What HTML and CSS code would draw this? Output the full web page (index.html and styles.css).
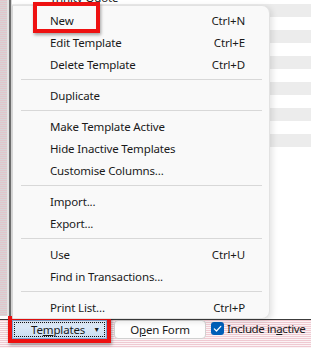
FILE: index.html
```html
<!DOCTYPE html>
<html lang="en">

<head>
    <meta charset="UTF-8">
    <meta name="viewport" content="width=device-width, initial-scale=1.0">
    <title>Templates</title>
    <link rel="stylesheet" href="styles.css">
</head>

<body>
    <div class="window">
        <div class="main">
            <div class="edge"></div>
            <div class="list">
                <div class="row row-top">Trinity Quote</div>
                <div class="row alt"></div>
                <div class="row"></div>
                <div class="row alt"></div>
                <div class="row"></div>
                <div class="row alt"></div>
                <div class="row"></div>
                <div class="row alt"></div>
                <div class="row"></div>
                <div class="row alt"></div>
                <div class="row"></div>
                <div class="row alt"></div>
            </div>
        </div>
        <div class="bar">
            <div class="mark">
                <div class="btn btn-templates">
                    <span>Te<u>m</u>plates</span>
                    <span class="caret">&#9660;</span>
                </div>
            </div>
            <div class="btn btn-open">O<u>p</u>en Form</div>
            <div class="check">
                <span class="box">
                    <svg width="13" height="13" viewBox="0 0 13 13">
                        <path d="M3.3 6.8 L5.5 9 L9.8 4.3" fill="none" stroke="#fff" stroke-width="1.2" stroke-linecap="round" stroke-linejoin="round" />
                    </svg>
                </span>
                <span>Include in<u>a</u>ctive</span>
            </div>
        </div>

        <div class="menu">
            <div class="item"><span>New</span><span class="key">Ctrl+N</span></div>
            <div class="item"><span>Edit Template</span><span class="key">Ctrl+E</span></div>
            <div class="item"><span>Delete Template</span><span class="key">Ctrl+D</span></div>
            <div class="sep"></div>
            <div class="item"><span>Duplicate</span></div>
            <div class="sep"></div>
            <div class="item"><span>Make Template Active</span></div>
            <div class="item"><span>Hide Inactive Templates</span></div>
            <div class="item"><span>Customise Columns...</span></div>
            <div class="sep"></div>
            <div class="item"><span>Import...</span></div>
            <div class="item"><span>Export...</span></div>
            <div class="sep"></div>
            <div class="item"><span>Use</span><span class="key">Ctrl+U</span></div>
            <div class="item"><span>Find in Transactions...</span></div>
            <div class="sep"></div>
            <div class="item"><span>Print List...</span><span class="key">Ctrl+P</span></div>
        </div>
        <div class="mark mark-new"></div>
    </div>
</body>

</html>
```

FILE: styles.css
```css
/* reset start */
* {
    padding: 0;
    margin: 0;
    box-sizing: border-box;
}

html,
body {
    width: 100%;
    height: 100%;
}

body {
    overflow: hidden;
    font-family: "Noto Sans", "Liberation Sans", sans-serif;
    font-size: 11.5px;
    letter-spacing: -0.15px;
    color: #1a1a1a;
    background: #fff;
}

/* reset end */
.window {
    position: relative;
    width: 311px;
    height: 348px;
    display: flex;
    flex-direction: column;
}

.main {
    flex: 1;
    display: flex;
    overflow: hidden;
}

.edge {
    width: 12px;
    background:
        linear-gradient(to right, transparent 0 7px, #e4e4e4 7px 9px, #6e6e6e 9px 11px, #d8d8d8 11px 12px),
        repeating-linear-gradient(to bottom, #e2c5cb 0 1px, #d6d6d6 1px 2px);
}

.list {
    flex: 1;
    background: #fff;
}

.row {
    height: 13px;
    line-height: 13px;
    padding-left: 38px;
    white-space: nowrap;
    overflow: hidden;
}

.row-top {
    margin-top: -9px;
}

.row.alt {
    background: #ececec;
}

/* bottom bar */
.bar {
    height: 32px;
    display: flex;
    align-items: flex-start;
    padding-left: 8px;
    white-space: nowrap;
    background:
        linear-gradient(to bottom, #fff 0 3px, #3c3c3c 3px 4px, transparent 4px),
        repeating-linear-gradient(to bottom, #efc9d1 0 1px, #fbf3f5 1px 2px);
}

.mark {
    border: 4px solid #ee1111;
    box-shadow: 1px 2px 3px rgba(0, 0, 0, .35);
}

.btn {
    height: 19px;
    display: flex;
    align-items: center;
    justify-content: center;
}

.btn-templates {
    width: 95px;
    padding: 0 6px 0 18px;
    justify-content: space-between;
    background: linear-gradient(to bottom, #e3eefa, #c9ddf2);
    border: 1px solid #7da2ce;
    outline: 1px dotted #111;
    outline-offset: -3px;
}

.caret {
    font-size: 7px;
}

.btn-open {
    width: 92px;
    margin: 4px 0 0 3px;
    background: #fdfdfd;
    border: 1px solid #d0d0d0;
    border-radius: 4px;
}

.check {
    display: flex;
    align-items: center;
    gap: 3px;
    margin: 5px 0 0 5px;
    height: 15px;
    letter-spacing: -0.4px;
}

.box {
    width: 13px;
    height: 13px;
    border-radius: 3px;
    background: #005fb8;
    display: flex;
}

/* popup menu */
.menu {
    position: absolute;
    left: 12px;
    top: 5px;
    width: 258px;
    height: 314px;
    padding: 3px 0;
    background: #f9f9f9;
    border: 1px solid #e2e2e2;
    border-left: 1px solid #d6d6d6;
    border-radius: 0 8px 8px 0;
    box-shadow: 2px 2px 6px rgba(0, 0, 0, .12);
}

.item {
    height: 22px;
    display: flex;
    align-items: center;
    justify-content: space-between;
    padding: 0 24px 0 37px;
    white-space: nowrap;
}

.sep {
    height: 9px;
    margin: 0 7px 0 8px;
    background: linear-gradient(to bottom, transparent 4px, #d8d8d8 4px 5px, transparent 5px);
}

.mark-new {
    position: absolute;
    left: 33px;
    top: 2px;
    width: 67px;
    height: 31px;
}
```
